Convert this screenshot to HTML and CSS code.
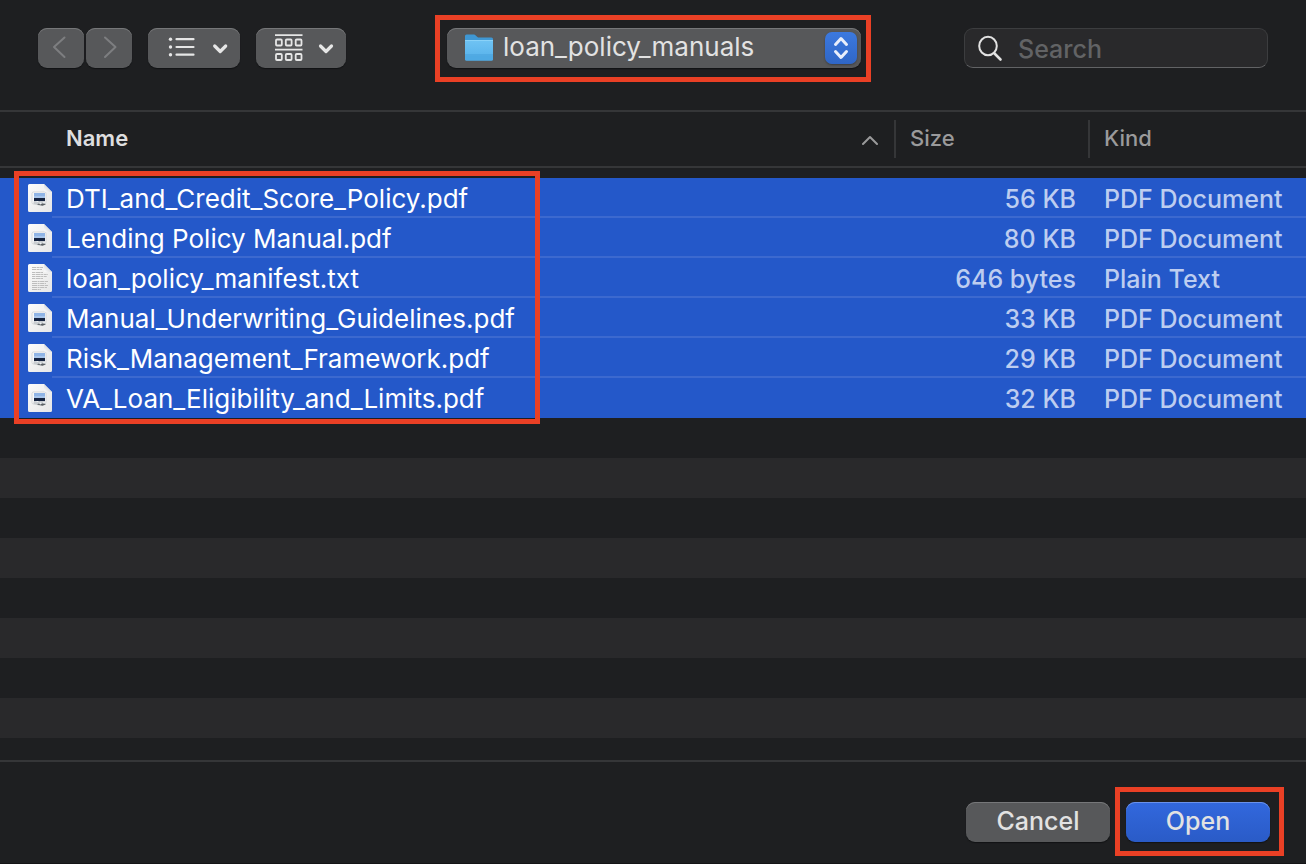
FILE: index.html
```html
<!DOCTYPE html>
<html lang="en">
<head>
<meta charset="utf-8">
<meta name="viewport" content="width=device-width, initial-scale=1">
<title>Open</title>
<link rel="stylesheet" href="styles.css">
</head>
<body>
<svg class="defs" aria-hidden="true">
  <defs>
    <linearGradient id="paper" x1="0" y1="0" x2="1" y2="1"><stop offset="0" stop-color="#fbfbfb"/><stop offset="1" stop-color="#e6e6e6"/></linearGradient>
    <linearGradient id="fold" x1="0" y1="1" x2="1" y2="0"><stop offset="0" stop-color="#ffffff"/><stop offset="1" stop-color="#b8bcc4"/></linearGradient>
    <linearGradient id="folder" x1="0" y1="0" x2="0" y2="1"><stop offset="0" stop-color="#6fc3f3"/><stop offset="1" stop-color="#55b0ea"/></linearGradient>
    <symbol id="pdf" viewBox="0 0 24 28">
      <path d="M1.5 0H16l8 8v18.500a1.500 1.500 0 0 1-1.500 1.500h-21A1.500 1.500 0 0 1 0 26.500v-25A1.500 1.500 0 0 1 1.500 0z" fill="url(#paper)"/>
      <path d="M16 0v6.500A1.500 1.500 0 0 0 17.500 8H24z" fill="url(#fold)"/>
      <rect x="4" y="8" width="14" height="12" rx="1.500" fill="#fafafa" stroke="#cfd1d3" stroke-width=".8"/>
      <path d="M6 9h11v5.500H6z" fill="#8fb4e6"/>
      <path d="M6 12h11v2.500H6z" fill="#a9c6ec"/>
      <path d="M6 14h11v3.500l-4 .5-3-1-4 .3z" fill="#15233f"/>
      <path d="M5.500 17.500l4.500.5 2-1h5l1 4-7 .500-5.500-1.500z" fill="#c9cdd1"/>
      <path d="M9 20.500l2.500-1.200 2 .7 2.500-1.200 1.500 1.700-3 1.200z" fill="#5b6064"/>
      <circle cx="12.300" cy="19.600" r="1" fill="#eef1f3"/><circle cx="16" cy="18.800" r="1" fill="#eef1f3"/>
    </symbol>
    <symbol id="txt" viewBox="0 0 24 28">
      <path d="M1.500 0H16l8 8v18.500a1.500 1.500 0 0 1-1.500 1.500h-21A1.500 1.500 0 0 1 0 26.500v-25A1.500 1.500 0 0 1 1.500 0z" fill="url(#paper)"/>
      <path d="M16 0v6.500A1.500 1.500 0 0 0 17.500 8H24z" fill="url(#fold)"/>
      <g stroke="#bdbdbd" stroke-width="1" fill="none">
        <path d="M4 3.500h11M4 5.500h10" stroke-dasharray="4 .6 3 .5"/>
        <path d="M4 8.500h11M4 10.500h16M4 12.500h15M4 14.500h11" stroke-dasharray="3 .6 5 .5 2 .6"/>
        <path d="M4 17.500h16M4 19.500h14M4 21.500h16M4 23.500h15M4 25.500h9" stroke-dasharray="5 .6 2 .5 4 .6"/>
      </g>
    </symbol>
  </defs>
</svg>

<header class="toolbar">
  <div class="tools">
    <div class="nav">
      <button class="control nav-button" type="button" aria-label="Back" disabled>
        <svg width="46" height="40" viewBox="0 0 46 40"><path d="M26.500 9.500 16 19l10.500 10"/></svg>
      </button>
      <button class="control nav-button" type="button" aria-label="Forward" disabled>
        <svg width="46" height="40" viewBox="0 0 46 40"><path d="M19 9.500 29.500 19 19 29"/></svg>
      </button>
    </div>
    <button class="control" type="button" aria-label="List view">
      <svg width="92" height="40" viewBox="0 0 92 40" fill="none" stroke="#e6e6e6" stroke-width="2.200" stroke-linecap="round">
        <path d="M28.500 11.200h17M28.500 19h17M28.500 26.700h17"/>
        <g fill="#e6e6e6" stroke="none"><circle cx="22.500" cy="11.200" r="1.700"/><circle cx="22.500" cy="19" r="1.700"/><circle cx="22.500" cy="26.700" r="1.700"/></g>
        <path d="M66.700 18l5.500 5.500 5.500-5.500" stroke-width="3.200" stroke-linejoin="round"/>
      </svg>
    </button>
    <button class="control" type="button" aria-label="Group items">
      <svg width="90" height="40" viewBox="0 0 90 40" fill="none" stroke="#e6e6e6" stroke-width="1.800">
        <path d="M19 7.200h27.500M19 21.700h27.500"/>
        <rect x="20" y="11.500" width="5.800" height="6" rx="1"/><rect x="29.800" y="11.500" width="5.800" height="6" rx="1"/><rect x="39.700" y="11.500" width="5.800" height="6" rx="1"/>
        <rect x="20" y="26" width="5.800" height="6" rx="1"/><rect x="29.800" y="26" width="5.800" height="6" rx="1"/><rect x="39.700" y="26" width="5.800" height="6" rx="1"/>
        <path d="M64.500 18l5.500 5.500 5.500-5.500" stroke-width="3.200" stroke-linecap="round" stroke-linejoin="round"/>
      </svg>
    </button>
  </div>

  <div class="mark mark-location">
    <div class="control location">
      <svg width="30" height="28" viewBox="0 0 30 28" aria-hidden="true">
        <path d="M1 2a1.500 1.500 0 0 1 1.500-1.500h7c1 0 1.500.3 2.200.9l1.700 1.500c.5.400 1 .6 1.800.6h12.300A1.500 1.500 0 0 1 29 5v5H1z" fill="#3f97d3"/>
        <path d="M1 6.500h28V25a1.500 1.500 0 0 1-1.500 1.500h-25A1.500 1.500 0 0 1 1 25z" fill="url(#folder)"/>
        <path d="M1 6.500h28" stroke="#8ad2f8"/>
        <path d="M1 21h28" stroke="#479fda"/><path d="M1 22h28v3a1.500 1.500 0 0 1-1.500 1.500h-25A1.500 1.500 0 0 1 1 25z" fill="#4ea9e3"/>
      </svg>
      <select class="location-select" aria-label="Folder"><option>loan_policy_manuals</option></select>
      <svg class="stepper" width="32" height="32" viewBox="0 0 32 32" aria-hidden="true"><path d="M10.500 12.500 16 6.500l5.500 6M10.500 19.500l5.500 6 5.500-6"/></svg>
    </div>
  </div>

  <label class="search">
    <svg width="26" height="28" viewBox="0 0 26 28" aria-hidden="true"><ellipse cx="11" cy="12" rx="8.800" ry="9.200"/><path d="M17.500 19.500l6 6" stroke-width="2.600"/></svg>
    <input type="search" placeholder="Search" aria-label="Search">
  </label>
</header>

<main class="browser">
  <table class="files">
    <colgroup><col class="col-icon"><col><col class="col-size"><col class="col-kind"></colgroup>
    <thead>
      <tr>
        <th></th>
        <th class="sorted" aria-sort="ascending"><div class="heading">Name
          <svg width="18" height="16" viewBox="0 0 18 16" aria-hidden="true"><path d="M3 14l7-7 7 7"/></svg></div></th>
        <th><div class="heading divided">Size</div></th>
        <th><div class="heading divided">Kind</div></th>
      </tr>
    </thead>
    <tbody>
      <tr><td class="icon"><svg width="24" height="28"><use href="#pdf"/></svg></td><td class="name">DTI_and_Credit_Score_Policy.pdf</td><td class="size">56 KB</td><td class="kind">PDF Document</td></tr>
      <tr><td class="icon"><svg width="24" height="28"><use href="#pdf"/></svg></td><td class="name">Lending Policy Manual.pdf</td><td class="size">80 KB</td><td class="kind">PDF Document</td></tr>
      <tr><td class="icon"><svg width="24" height="28"><use href="#txt"/></svg></td><td class="name">loan_policy_manifest.txt</td><td class="size">646 bytes</td><td class="kind">Plain Text</td></tr>
      <tr><td class="icon"><svg width="24" height="28"><use href="#pdf"/></svg></td><td class="name">Manual_Underwriting_Guidelines.pdf</td><td class="size">33 KB</td><td class="kind">PDF Document</td></tr>
      <tr><td class="icon"><svg width="24" height="28"><use href="#pdf"/></svg></td><td class="name">Risk_Management_Framework.pdf</td><td class="size">29 KB</td><td class="kind">PDF Document</td></tr>
      <tr><td class="icon"><svg width="24" height="28"><use href="#pdf"/></svg></td><td class="name">VA_Loan_Eligibility_and_Limits.pdf</td><td class="size">32 KB</td><td class="kind">PDF Document</td></tr>
    </tbody>
  </table>
  <div class="mark mark-files" aria-hidden="true"></div>
  <div class="empty-rows"></div>
</main>

<footer class="actions">
  <button class="control action" type="button">Cancel</button>
  <div class="mark mark-open"><button class="control action primary" type="button">Open</button></div>
</footer>
</body>
</html>
```
FILE: styles.css
```css
* { box-sizing: border-box; }

body {
  margin: 0;
  min-height: 100vh;
  display: flex;
  flex-direction: column;
  background: #1e1f21;
  color: #e2e2e2;
  font-family: Inter, "Liberation Sans", sans-serif;
  font-size: 25px;
  font-weight: 500;
  line-height: 38px;
  border-bottom: 1px solid #141416;
}

button, input, select { font: inherit; color: inherit; }
svg { display: block; flex: none; }
.defs { position: absolute; width: 0; height: 0; }

.control {
  padding: 0;
  height: 40px;
  border: 0;
  border-radius: 9px;
  background: #57585a;
  box-shadow: inset 0 1px 0 #767779, 0 1px 1px #111214;
}

.mark { border: 5px solid #ea4025; }

.toolbar {
  display: grid;
  grid-template-columns: 1fr auto 1fr;
  align-items: start;
  padding: 15px 38px 28px;
  border-bottom: 2px solid #353638;
}

.tools { display: flex; gap: 16px; margin-top: 13px; }
.nav { display: flex; gap: 2px; }
.nav-button svg { fill: none; stroke: #7d7e80; stroke-width: 2; stroke-linecap: round; stroke-linejoin: round; }

.mark-location { padding: 8px 5px 9px 7px; }
.location {
  display: flex;
  align-items: center;
  width: 414px;
  padding: 0 4px 0 17px;
}
.location-select {
  flex: 1;
  min-width: 0;
  height: 40px;
  padding: 0 0 2px 9px;
  border: 0;
  appearance: none;
  background: transparent;
  font-size: 26px;
  font-weight: 400;
}
.stepper {
  border-radius: 7px;
  background: linear-gradient(#3c79df, #2f66c6);
  box-shadow: 0 1px 2px #3c3d40;
  fill: none;
  stroke: #e8eefb;
  stroke-width: 3;
  stroke-linecap: round;
  stroke-linejoin: round;
}

.search {
  justify-self: end;
  display: flex;
  align-items: center;
  gap: 15px;
  width: 304px;
  height: 40px;
  margin-top: 13px;
  padding: 0 12px;
  border: 1px solid #3c3d3f;
  border-bottom-color: #626365;
  border-radius: 9px;
  background: #29292b;
}
.search svg { fill: none; stroke: #e2e2e2; stroke-width: 2; stroke-linecap: round; }
.search input {
  flex: 1;
  min-width: 0;
  height: 38px;
  padding: 2px 0 0;
  border: 0;
  background: transparent;
  appearance: none;
}
.search input::placeholder { color: #626365; opacity: 1; }

.browser {
  position: relative;
  flex: 1;
  display: flex;
  flex-direction: column;
  border-bottom: 2px solid #353638;
}

.files { width: 100%; table-layout: fixed; border-collapse: separate; border-spacing: 0; }
.col-icon { width: 52px; }
.col-size { width: 194px; }
.col-kind { width: 218px; }

.files th {
  height: 56px;
  padding: 0;
  border-bottom: 2px solid #353638;
  font-size: 22px;
  font-weight: 500;
  color: #9a9a9b;
  text-align: left;
}
.files th.sorted { padding: 0 16px 0 14px; font-weight: 600; color: #dededf; }
.heading { display: flex; align-items: center; justify-content: space-between; height: 38px; padding-bottom: 2px; }
.heading svg { fill: none; stroke: #9a9a9b; stroke-width: 2; stroke-linecap: round; stroke-linejoin: round; }
.divided { border-left: 2px solid #353638; padding-left: 14px; }

.files tbody::before { content: ""; display: table-row; height: 10px; }
.files tbody tr { background: #2458c9; }
.files td { height: 40px; padding: 4px 0 0; line-height: 34px; white-space: nowrap; border-bottom: 2px solid #3c69cf; }
.files td.icon { padding: 0 0 0 28px; border-bottom: 0; }
.files tr:last-child td { border-bottom-color: transparent; }
.files td.name { padding-left: 14px; color: #ffffff; font-size: 26px; font-weight: 400; }
.files td.size { padding-right: 12px; text-align: right; color: #bdcdf0; }
.files td.kind { padding-left: 16px; color: #bdcdf0; }

.mark-files {
  position: absolute;
  top: 59px;
  left: 14px;
  width: 526px;
  height: 253px;
}

.empty-rows { flex: 1; background: repeating-linear-gradient(#1e1f21 0 40px, #29292b 40px 80px); }

.actions {
  display: flex;
  justify-content: flex-end;
  align-items: center;
  gap: 5px;
  padding: 25px 22px 7px;
}
.action { width: 144px; line-height: 36px; padding-bottom: 2px; }
.mark-open { padding: 10px 9px 9px 6px; }
.primary { background: linear-gradient(#3268dd, #2a5bc7); box-shadow: inset 0 1px 0 #6a92ea, 0 1px 1px #111214; }
```
